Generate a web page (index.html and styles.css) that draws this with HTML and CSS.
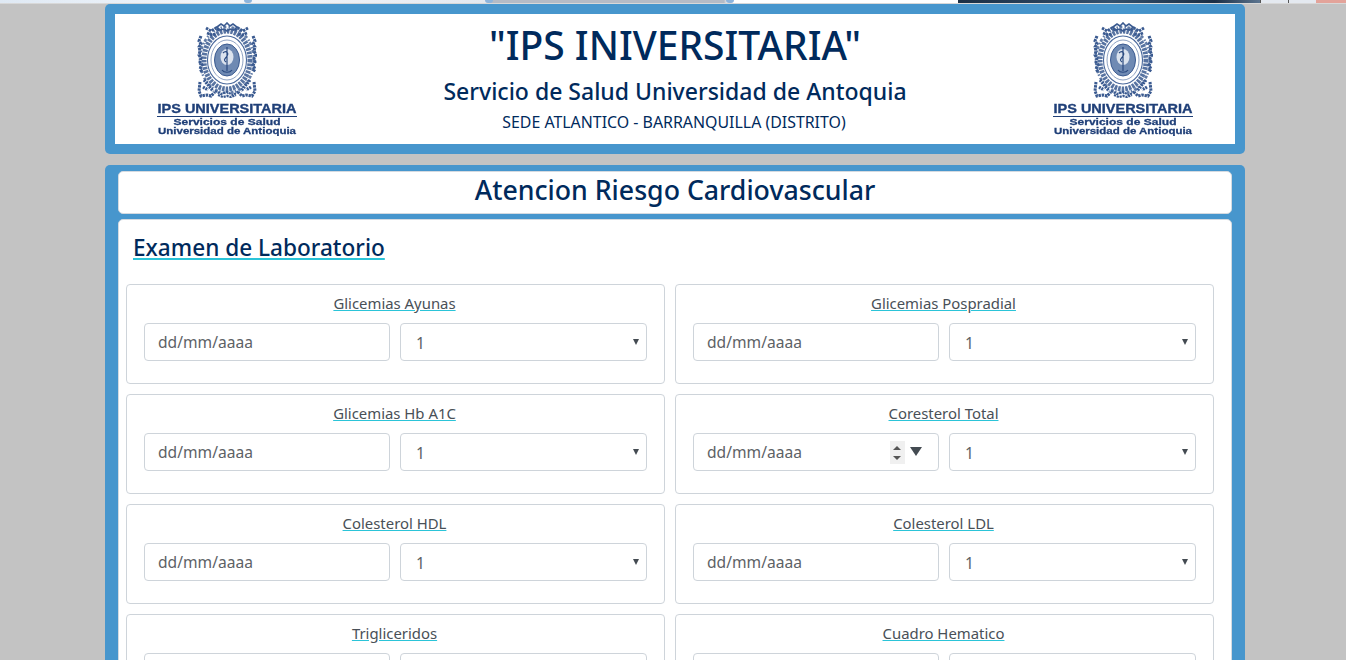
FILE: index.html
```html
<!DOCTYPE html>
<html lang="es">
<head>
	<meta charset="UTF-8">
	<title>Atencion Riesgo Cardiovascular</title>
	<link rel="stylesheet" href="styles.css">
</head>
<body>
	<svg class="defs" width="0" height="0">
		<symbol id="escudo" viewBox="0 0 60 76">
			<g fill="none" stroke="#3a5a90">
				<!-- follaje alrededor del ovalo -->
				<ellipse cx="30" cy="38" rx="23" ry="29" stroke-width="5" stroke-dasharray="2.6 1" opacity=".85"/>
				<ellipse cx="30" cy="38" rx="27" ry="33" stroke-width="2.6" stroke-dasharray="3 2.2 1.5 1.4" opacity=".8"/>
				<path d="M9 6l5 3 5-3 4 3M51 6l-5 3-5-3-4 3M10 11l5 2 4-1M50 11l-5 2-4-1" stroke-width="2.8" stroke-dasharray="2.5 .8"/>
				<path d="M20 5l4-3 3 2 3-3 3 3 3-2 4 3-3 3-4-1-3 2-3-2-4 1z" stroke-width="1.6"/>
				<path d="M4 14l-2 5 2 3-2 3 1 4-1 4 2 3-1 4 2 3-2 4 2 3" stroke-width="3" stroke-dasharray="2.6 .8"/>
				<path d="M56 14l2 5-2 3 2 3-1 4 2 4-2 3 1 4-2 3 2 4-2 3" stroke-width="3" stroke-dasharray="2.6 .8"/>
				<path d="M3 60l-1 9 2 5 6-1 4 1 4-4M57 60l1 9-3 5-6-1-4 1-4-4" stroke-width="3" stroke-dasharray="2.4 .8"/>
				<path d="M7 58l5 6 4 5M6 65l5 3M53 58l-5 6-4 5M54 65l-5 3" stroke-width="3.2" stroke-dasharray="2 .8"/>
				<path d="M18 69l6 3 6-2 6 3 6-4M21 73l5 2 4-1 4 1 5-2" stroke-width="2.2" stroke-dasharray="2.2 .8"/>
			</g>
			<ellipse cx="30" cy="38" rx="19.5" ry="24" fill="#fff" stroke="#4a699c" stroke-width="1.1"/>
			<ellipse cx="30" cy="38" rx="16" ry="20" fill="#fff" stroke="#8fa3c3" stroke-width="1"/>
			<ellipse cx="30" cy="38" rx="12.5" ry="16" fill="#6f8ab3" stroke="#3a5a90" stroke-width="1"/>
			<ellipse cx="30" cy="35" rx="6.5" ry="8" fill="#dbe3ee"/>
			<path d="M30 25v24M25 48c2 3 8 3 10 0M26 31c3-3 6 0 4 3s-4 4-1 6" fill="none" stroke="#2a4a80" stroke-width="1.2"/>
		</symbol>
	</svg>

	<div class="tira">
		<span class="tira-claro"><i></i><i></i><i></i></span>
		<span class="tira-oscuro"></span>
		<span class="tira-gris"></span>
		<span class="tira-gris corta"></span>
		<span class="tira-rosa"></span>
	</div>

	<div class="contenedor">
		<header class="cabecera">
			<div class="cabecera-blanca">
				<svg class="logo" viewBox="0 0 140 114">
					<use href="#escudo" x="40" y="0" width="60" height="76"/>
					<text class="logo-a" x="70" y="91" textLength="139" lengthAdjust="spacingAndGlyphs">IPS UNIVERSITARIA</text>
					<rect class="logo-raya" x="0" y="94" width="140" height="1"/>
					<text class="logo-b" x="70" y="103" textLength="107" lengthAdjust="spacingAndGlyphs">Servicios de Salud</text>
					<text class="logo-b" x="70" y="112" textLength="138" lengthAdjust="spacingAndGlyphs">Universidad de Antioquia</text>
				</svg>
				<div class="cabecera-textos">
					<h1>"IPS INIVERSITARIA"</h1>
					<h2>Servicio de Salud Universidad de Antoquia</h2>
					<p>SEDE ATLANTICO - BARRANQUILLA (DISTRITO)</p>
				</div>
				<svg class="logo" viewBox="0 0 140 114">
					<use href="#escudo" x="40" y="0" width="60" height="76"/>
					<text class="logo-a" x="70" y="91" textLength="139" lengthAdjust="spacingAndGlyphs">IPS UNIVERSITARIA</text>
					<rect class="logo-raya" x="0" y="94" width="140" height="1"/>
					<text class="logo-b" x="70" y="103" textLength="107" lengthAdjust="spacingAndGlyphs">Servicios de Salud</text>
					<text class="logo-b" x="70" y="112" textLength="138" lengthAdjust="spacingAndGlyphs">Universidad de Antioquia</text>
				</svg>
			</div>
		</header>

		<main class="panel">
			<div class="titulo">Atencion Riesgo Cardiovascular</div>
			<section class="tarjeta">
				<h3>Examen de Laboratorio</h3>
				<div class="examenes">
					<div class="examen">
						<label>Glicemias Ayunas</label>
						<div class="campos">
							<input type="text" placeholder="dd/mm/aaaa">
							<select><option>1</option></select>
						</div>
					</div>
					<div class="examen">
						<label>Glicemias Pospradial</label>
						<div class="campos">
							<input type="text" placeholder="dd/mm/aaaa">
							<select><option>1</option></select>
						</div>
					</div>
					<div class="examen">
						<label>Glicemias Hb A1C</label>
						<div class="campos">
							<input type="text" placeholder="dd/mm/aaaa">
							<select><option>1</option></select>
						</div>
					</div>
					<div class="examen">
						<label>Coresterol Total</label>
						<div class="campos">
							<div class="fecha-hover">
								<input type="text" placeholder="dd/mm/aaaa">
								<span class="giro"><i class="sube"></i><i class="baja"></i></span>
								<span class="despliega"></span>
							</div>
							<select><option>1</option></select>
						</div>
					</div>
					<div class="examen">
						<label>Colesterol HDL</label>
						<div class="campos">
							<input type="text" placeholder="dd/mm/aaaa">
							<select><option>1</option></select>
						</div>
					</div>
					<div class="examen">
						<label>Colesterol LDL</label>
						<div class="campos">
							<input type="text" placeholder="dd/mm/aaaa">
							<select><option>1</option></select>
						</div>
					</div>
					<div class="examen">
						<label>Trigliceridos</label>
						<div class="campos">
							<input type="text" placeholder="dd/mm/aaaa">
							<select><option>1</option></select>
						</div>
					</div>
					<div class="examen">
						<label>Cuadro Hematico</label>
						<div class="campos">
							<input type="text" placeholder="dd/mm/aaaa">
							<select><option>1</option></select>
						</div>
					</div>
				</div>
			</section>
		</main>
	</div>
</body>
</html>
```

FILE: styles.css
```css
*{box-sizing: border-box;}
html{overflow: hidden;}
body{
	margin: 0;
	background: #c3c3c3;
	font-family: "Noto Sans", "Open Sans", sans-serif;
	color: #495057;
}
.defs{display: block;height: 0;}

/* resto de la barra del navegador */
.tira{
	display: flex;
	height: 4px;
	background: #fff;
	border-bottom: 1px solid #d8d8d8;
}
.tira-claro{
	display: flex;
	flex: 0 0 958px;
	padding-left: 244px;
	gap: 233px;
	background: linear-gradient(90deg, #dfe9f4, #f4f7fb 240px, #e3e8ef 487px, #b4bbc6 490px, #b4bbc6 724px, #fff 728px);
}
.tira-claro i{
	width: 8px;
	height: 3px;
	background: #8db4dc;
	border-radius: 0 0 4px 4px;
}
.tira-oscuro{flex: 0 0 302px;background: linear-gradient(90deg, #1c2f45, #33516f 50%, #1c2f45 85%, #5c7590);}
.tira-gris{flex: 0 0 28px;background: #e4e9f0;border-left: 1px solid #555;}
.tira-rosa{flex: 1;background: #e3a39a;}

.contenedor{
	width: 1140px;
	margin-left: 105px;
}
.cabecera{
	height: 150px;
	padding: 10px;
	background: #4796cd;
	border-radius: 5px;
}
.cabecera-blanca{
	display: flex;
	justify-content: space-between;
	height: 130px;
	padding: 8px 42px 0;
	background: #fff;
}
.logo{
	width: 140px;
	height: 114px;
	filter: blur(.35px);
}
.logo-a,.logo-b{
	font-family: "Liberation Sans", sans-serif;
	font-weight: bold;
	text-anchor: middle;
	fill: #1f3f78;
	stroke: #1f3f78;
}
.logo-a{font-size: 13px;stroke-width: .35px;}
.logo-b{font-size: 9.8px;stroke-width: .3px;}
.logo-raya{fill: #1f3f78;}
.cabecera-textos{
	flex: 1;
	text-align: center;
	color: #002a5c;
}
.cabecera-textos h1{
	margin: -1px 0 0;
	font-size: 39px;
	font-weight: 500;
	line-height: 48px;
}
.cabecera-textos h2{
	margin: 7px 0 0;
	font-size: 23px;
	font-weight: 500;
	line-height: 30px;
}
.cabecera-textos p{
	margin: 5px 2px 0 0;
	font-size: 15.9px;
	line-height: 22px;
}

.panel{
	margin-top: 11px;
	padding: 6px 13px 20px;
	background: #4796cd;
	border-radius: 5px 5px 0 0;
}
.titulo{
	height: 43px;
	margin-bottom: 5px;
	background: #fff;
	border: 1px solid #d5dae0;
	border-radius: 5px;
	text-align: center;
	font-size: 26.7px;
	font-weight: 500;
	line-height: 36px;
	color: #002a5c;
}
.tarjeta{
	padding: 0 18px 18px 7px;
	background: #fff;
	border-radius: 5px;
	border: 1px solid #d5dae0;
}
.tarjeta h3{
	display: inline-block;
	margin: 0;
	padding: 12px 0 0 7px;
	height: 64px;
	font-size: 22.6px;
	font-weight: 500;
	line-height: 32px;
	color: #002a5c;
	text-decoration: underline;
	text-decoration-color: #2bc4d8;
}
.examenes{
	display: grid;
	grid-template-columns: 539px 539px;
	gap: 10px;
}
.examen{
	height: 100px;
	padding: 7px 17px 0;
	border: 1px solid #ced4da;
	border-radius: 4px;
	text-align: center;
}
.examen label{
	display: block;
	height: 31px;
	padding-right: 2px;
	font-size: 14.9px;
	line-height: 22px;
	text-decoration: underline;
	text-decoration-color: #2bc4d8;
}
.campos{
	display: grid;
	grid-template-columns: 246px 247px;
	gap: 10px;
}
input,select{
	width: 100%;
	height: 38px;
	padding: 0 13px;
	border: 1px solid #ced4da;
	border-radius: 4px;
	background-color: #fff;
	font: 15.6px "Noto Sans", "Open Sans", sans-serif;
	color: #5d6266;
	outline: none;
}
input::placeholder{color: #5d6266;opacity: 1;}
select{
	padding: 2px 0 0 15px;
	appearance: none;
	background-image: url("data:image/svg+xml,%3Csvg xmlns='http://www.w3.org/2000/svg' width='6' height='6'%3E%3Cpath d='M0 0h6L3 6z' fill='%23444b52'/%3E%3C/svg%3E");
	background-repeat: no-repeat;
	background-position: right 7px center;
}

/* el campo de fecha con el cursor encima */
.fecha-hover{position: relative;}
.giro{
	position: absolute;
	top: 8px;
	left: 197px;
	width: 15px;
	height: 23px;
	background: #f0f0f0;
}
.giro i{
	position: absolute;
	left: 3px;
	border-left: 4px solid transparent;
	border-right: 4px solid transparent;
}
.giro .sube{top: 5px;border-bottom: 4px solid #555;}
.giro .baja{bottom: 4px;border-top: 4px solid #555;}
.despliega{
	position: absolute;
	top: 14px;
	left: 217px;
	border-left: 6px solid transparent;
	border-right: 6px solid transparent;
	border-top: 9px solid #444b52;
}
```
